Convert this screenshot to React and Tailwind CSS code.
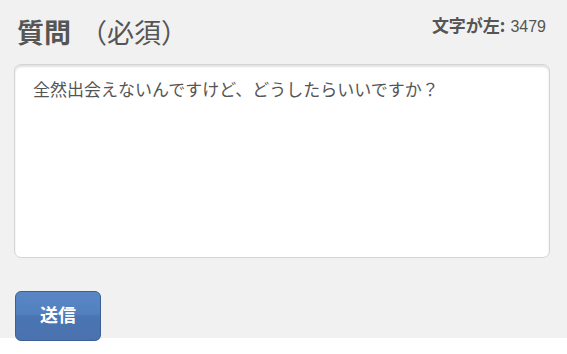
export default function App() {
  const font = { fontFamily: '"Noto Sans CJK JP", "Liberation Sans", sans-serif' };
  return (
    <div className="w-[567px] h-[354px] bg-white">
      <div className="h-[338px] bg-[#f1f1f1] px-[14px] pt-[12px] text-[#555]" style={font}>
        <div className="flex items-start justify-between pl-[3px] pr-[7px]">
          <h2 className="text-[27px] leading-[40px] font-bold">
            質問
            <span className="ml-[9px] font-normal">（必須）</span>
          </h2>
          <div className="flex items-baseline pt-[2px] leading-[22px]">
            <span className="text-[17px] font-bold">文字が左:</span>
            <span className="ml-[5px] text-[16px]" style={{ fontFamily: '"Liberation Sans", sans-serif' }}>
              3479
            </span>
          </div>
        </div>
        <div className="mt-[12px] h-[194px] w-[536px] rounded-[7px] border border-[#d4d4d4] bg-white px-[18px] pt-[11px] shadow-[inset_0_2px_2px_rgba(0,0,0,0.12)]">
          <p className="text-[17px] leading-[26px] text-[#555]">
            全然出会えないんですけど、どうしたらいいですか？
          </p>
        </div>
        <button className="mt-[33px] ml-[1px] flex h-[50px] w-[86px] items-start justify-center rounded-[6px] border border-[#3c5f95] bg-[linear-gradient(to_bottom,#5a86c4_0%,#5280bf_46%,#4a74b2_50%,#4a72af_100%)] pt-[10px] text-[18px] leading-[24px] font-bold text-white">
          送信
        </button>
      </div>
    </div>
  );
}
